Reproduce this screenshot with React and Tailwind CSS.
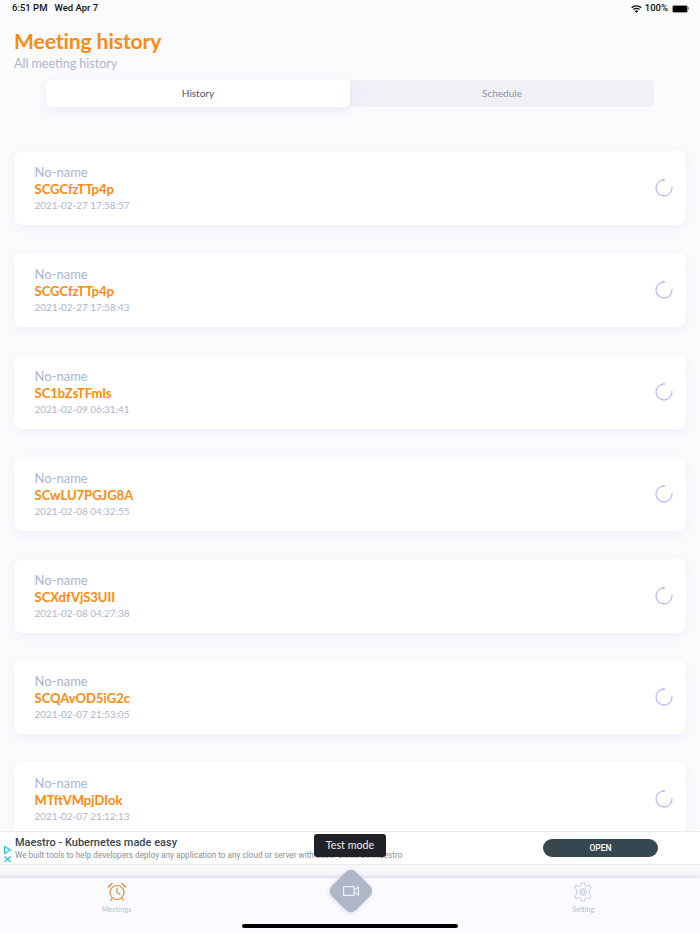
const meetings = [
  { code: "SCGCfzTTp4p", time: "2021-02-27 17:58:57" },
  { code: "SCGCfzTTp4p", time: "2021-02-27 17:58:43" },
  { code: "SC1bZsTFmls", time: "2021-02-09 06:31:41" },
  { code: "SCwLU7PGJG8A", time: "2021-02-08 04:32:55" },
  { code: "SCXdfVjS3UII", time: "2021-02-08 04:27:38" },
  { code: "SCQAvOD5iG2c", time: "2021-02-07 21:53:05" },
  { code: "MTftVMpjDIok", time: "2021-02-07 21:12:13" },
];

function Spinner() {
  return (
    <svg width="20" height="20" viewBox="0 0 20 20" fill="none" stroke="#bfbff5" strokeWidth="1.3" strokeLinecap="round">
      <path d="M10 2 A8 8 0 1 0 18 9.5" />
      <path d="M9.3 1.2 L10.8 2 L9.3 2.8 Z" fill="#bfbff5" strokeWidth="0.8" />
    </svg>
  );
}

function MeetingCard({ code, time }) {
  return (
    <div className="flex items-center justify-between h-[74px] shrink-0 bg-white rounded-lg pl-[21px] pr-[12px] shadow-[0_3px_10px_rgba(200,205,240,0.25)]">
      <div className="flex flex-col -ml-[0.5px]">
        <span className="text-[13px] leading-[17px] text-[#a9b6cf]">No-name</span>
        <span className="text-[13px] leading-[17px] font-bold text-[#ff8a0d]">{code}</span>
        <span className="text-[9.9px] leading-[14px] text-[#a9b6cf]">{time}</span>
      </div>
      <Spinner />
    </div>
  );
}

function ClockIcon() {
  return (
    <svg width="20" height="20" viewBox="0 0 20 20" fill="none" stroke="#d98f35" strokeWidth="1.2" strokeLinecap="round">
      <circle cx="10" cy="10.5" r="7" />
      <path d="M10 6 V10.5 L13 12.5" />
      <path d="M1.5 5 L5 1.5 M15 1.5 L18.5 5" strokeWidth="1.5" />
      <path d="M5 16.5 L3.5 18.5 M15 16.5 L16.5 18.5" />
    </svg>
  );
}

function GearIcon() {
  return (
    <svg width="20" height="20" viewBox="0 0 20 20" fill="none" stroke="#b4bfd3" strokeWidth="0.8" strokeLinejoin="round">
      <path d="M8.3 1 H11.7 L12.3 3.6 L14.4 4.5 L16.7 3.1 L18.4 6 L16.4 7.8 V10 V12.2 L18.4 14 L16.7 16.9 L14.4 15.5 L12.3 16.4 L11.7 19 H8.3 L7.7 16.4 L5.6 15.5 L3.3 16.9 L1.6 14 L3.6 12.2 V7.8 L1.6 6 L3.3 3.1 L5.6 4.5 L7.7 3.6 Z" />
      <circle cx="10" cy="10" r="3.4" />
      <circle cx="10" cy="10" r="1.8" />
    </svg>
  );
}

function WifiIcon() {
  return (
    <svg width="11" height="8" viewBox="0 0 11 8" fill="#111">
      <path d="M5.5 8 L3.7 6 A2.6 2.6 0 0 1 7.3 6 Z" />
      <path d="M2.9 5.1 L2 4.1 A5 5 0 0 1 9 4.1 L8.1 5.1 A3.8 3.8 0 0 0 2.9 5.1 Z" />
      <path d="M1.2 3.3 L.2 2.3 A7.6 7.6 0 0 1 10.8 2.3 L9.8 3.3 A6.2 6.2 0 0 0 1.2 3.3 Z" />
    </svg>
  );
}

export default function App() {
  return (
    <div className="relative flex flex-col w-[700px] h-[934px] overflow-hidden bg-[#fbfbfd] font-['Lato',sans-serif]">
      {/* status bar */}
      <div className="flex items-center justify-between h-4 shrink-0 pl-3 pr-[11px] pt-[1px] font-['Roboto',sans-serif] text-[9.5px] font-medium text-[#111]">
        <div className="flex gap-[7px]">
          <span>6:51 PM</span>
          <span>Wed Apr 7</span>
        </div>
        <div className="flex items-center gap-[3px]">
          <WifiIcon />
          <span>100%</span>
          <div className="flex items-center ml-[1px]">
            <div className="w-[16px] h-[8px] rounded-[2px] bg-black border border-[#999]" />
            <div className="w-[1px] h-[3px] bg-[#999]" />
          </div>
        </div>
      </div>

      {/* header */}
      <div className="flex flex-col shrink-0 pl-[14px] pt-[12px]">
        <h1 className="text-[21px] leading-[26px] font-bold tracking-[-0.05px] text-[#ff8a0d]">Meeting history</h1>
        <p className="mt-[1px] text-[12.5px] leading-[18px] text-[#a9b6cf]">All meeting history</p>
      </div>

      {/* tabs */}
      <div className="flex shrink-0 h-[27px] mx-[46px] mt-[7px] rounded bg-[#f0f1f7] text-[10px]">
        <div className="flex flex-1 items-center justify-center rounded bg-white text-[#55555f] shadow-[0_4px_12px_rgba(200,205,240,0.35)]">History</div>
        <div className="flex flex-1 items-center justify-center text-[#8f8fa8]">Schedule</div>
      </div>

      {/* list */}
      <div className="flex flex-col flex-1 min-h-0 gap-[27.85px] overflow-hidden px-[14px] pt-[44.2px]">
        {meetings.map((m) => (
          <MeetingCard key={m.time} code={m.code} time={m.time} />
        ))}
      </div>

      {/* ad banner */}
      <div className="flex items-center shrink-0 h-[34px] bg-white border-y border-[#ececec] font-['Roboto',sans-serif]">
        <div className="flex flex-col items-center justify-end self-stretch w-[15px] pb-[1px]">
          <svg width="9" height="18" viewBox="0 0 9 18" fill="none" stroke="#27c0dc" strokeWidth="1.2">
            <path d="M1.5 1.5 L7.5 5 L1.5 8.5 Z" />
            <path d="M1.5 11.5 L7.5 17 M7.5 11.5 L1.5 17" />
          </svg>
        </div>
        <div className="flex flex-col flex-1 min-w-0 leading-none">
          <span className="text-[11px] leading-[15px] font-medium text-[#37474f]">Maestro - Kubernetes made easy</span>
          <span className="text-[8.2px] leading-[11px] whitespace-nowrap text-[#8a9095]">We built tools to help developers deploy any application to any cloud or server with ease. Cloud So Maestro</span>
        </div>
        <div className="flex items-center justify-center w-[115px] h-[18px] mr-[42px] rounded-full bg-[#37474f] text-[8.5px] font-medium text-white">OPEN</div>
      </div>

      {/* gap above tab bar */}
      <div className="h-[13px] shrink-0 bg-[#f8f8fa]" />

      {/* tab bar */}
      <div className="grid grid-cols-3 shrink-0 h-[56px] bg-[#fafaff] shadow-[0_-1px_4px_rgba(190,185,225,0.6)]">
        <div className="flex flex-col items-center pt-[4px]">
          <ClockIcon />
          <span className="mt-[3px] text-[7.2px] text-[#b4bfd3]">Meetings</span>
        </div>
        <div />
        <div className="flex flex-col items-center pt-[4px]">
          <GearIcon />
          <span className="mt-[3px] text-[7.2px] text-[#b4bfd3]">Setting</span>
        </div>
      </div>

      {/* toast */}
      <div className="absolute left-[314px] top-[834px] flex items-center justify-center w-[72px] h-[23px] rounded-[3px] bg-[#212227] text-[10.7px] text-[#eee]">Test mode</div>

      {/* center button */}
      <div className="absolute left-[333.5px] top-[873.5px] flex items-center justify-center w-[34px] h-[34px] rotate-45 rounded-[7px] bg-[#aeb7c8] shadow-[0_1px_4px_rgba(190,195,235,0.7)]">
        <svg className="-rotate-45" width="16" height="10" viewBox="0 0 16 10" fill="none" stroke="#f3f4f8" strokeWidth="1.1">
          <rect x="0.6" y="0.6" width="10.5" height="8.8" />
          <path d="M11.1 4 L15.4 1 V9 L11.1 6" />
        </svg>
      </div>

      {/* home indicator */}
      <div className="absolute left-[242px] bottom-[6px] w-[216px] h-[4px] rounded-full bg-black" />
    </div>
  );
}
